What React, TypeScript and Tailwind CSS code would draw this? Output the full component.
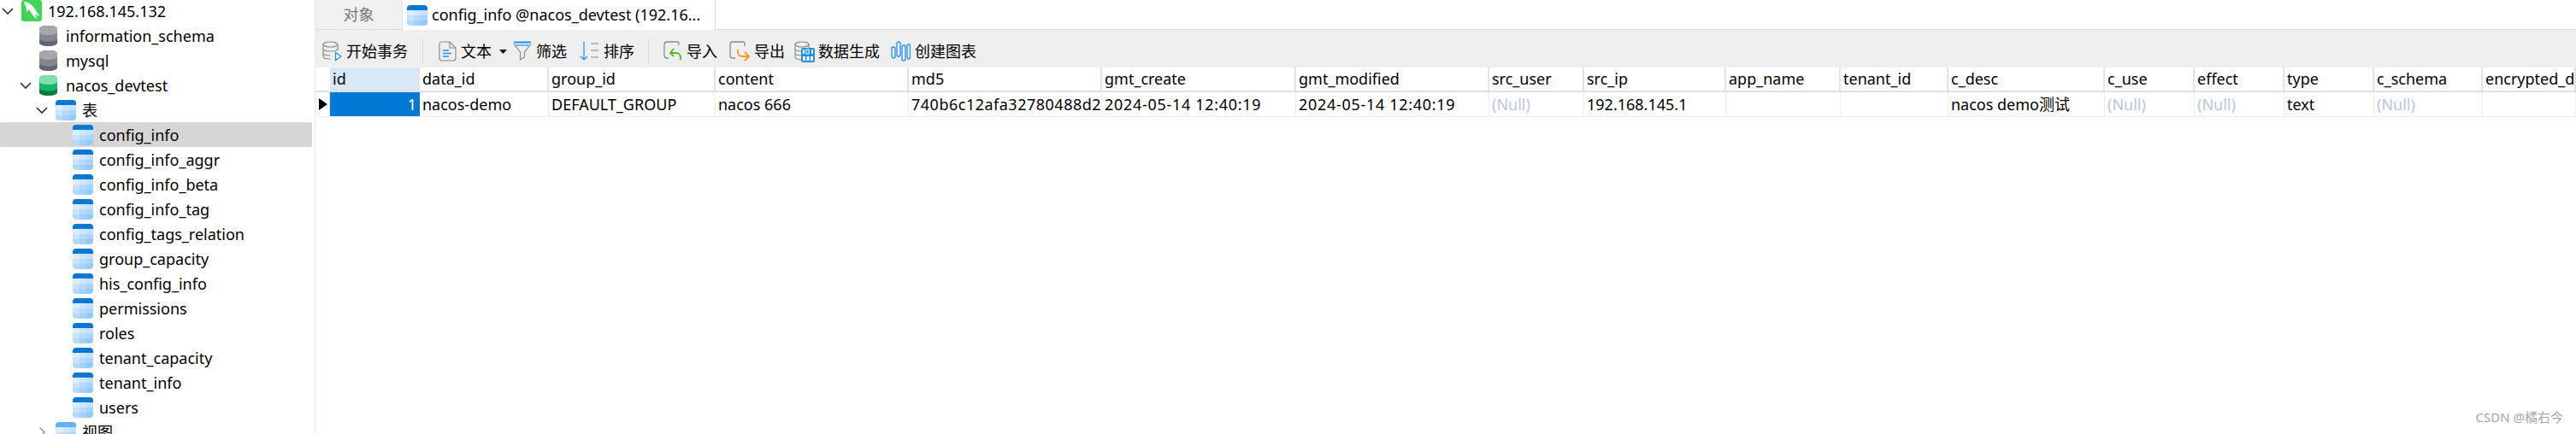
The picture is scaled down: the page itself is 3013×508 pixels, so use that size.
const tables = [
  "config_info",
  "config_info_aggr",
  "config_info_beta",
  "config_info_tag",
  "config_tags_relation",
  "group_capacity",
  "his_config_info",
  "permissions",
  "roles",
  "tenant_capacity",
  "tenant_info",
  "users",
];

const columns = [
  "id",
  "data_id",
  "group_id",
  "content",
  "md5",
  "gmt_create",
  "gmt_modified",
  "src_user",
  "src_ip",
  "app_name",
  "tenant_id",
  "c_desc",
  "c_use",
  "effect",
  "type",
  "c_schema",
  "encrypted_data_key",
];

const row = [
  "1",
  "nacos-demo",
  "DEFAULT_GROUP",
  "nacos 666",
  "740b6c12afa32780488d2",
  "2024-05-14 12:40:19",
  "2024-05-14 12:40:19",
  "(Null)",
  "192.168.145.1",
  "",
  "",
  "nacos demo测试",
  "(Null)",
  "(Null)",
  "text",
  "(Null)",
  "",
];

const gridCols =
  "grid grid-cols-[17px_105px_151px_195px_226px_226px_227px_226px_111px_166px_134px_126px_183px_105px_105px_105px_127px_109px]";

function Chevron({ open = true }: { open?: boolean }) {
  return (
    <svg width="14" height="14" viewBox="0 0 14 14" fill="none" stroke={open ? "#333" : "#999"} strokeWidth="1.600">
      {open ? <path d="M1 4l6 6 6-6" /> : <path d="M4.500 1.500 10 7l-5.500 5.500" />}
    </svg>
  );
}

function TableIcon({ faded = false }: { faded?: boolean }) {
  return (
    <svg width="24" height="24" viewBox="0 0 24 24" className="shrink-0">
      <defs>
        <clipPath id="tbl">
          <rect width="24" height="24" rx="4" />
        </clipPath>
      </defs>
      <g clipPath="url(#tbl)">
        <rect width="24" height="6" fill={faded ? "#62b2f2" : "#0a78d2"} />
        <rect y="6" width="8" height="6" fill="#dcedff" />
        <rect x="8" y="6" width="8" height="6" fill="#cfe6ff" />
        <rect x="16" y="6" width="8" height="6" fill="#c3e0ff" />
        <rect y="12" width="8" height="6" fill="#c9e3ff" />
        <rect x="8" y="12" width="8" height="6" fill="#b6daff" />
        <rect x="16" y="12" width="8" height="6" fill="#a9d4ff" />
        <rect y="18" width="8" height="6" fill="#b4d9ff" />
        <rect x="8" y="18" width="8" height="6" fill="#a2d0ff" />
        <rect x="16" y="18" width="8" height="6" fill="#92c9ff" />
      </g>
    </svg>
  );
}

function DbIcon({ top, mid, low }: { top: string; mid: string; low: string }) {
  return (
    <svg width="21" height="24" viewBox="0 0 21 24" className="mr-[3px] shrink-0">
      <path d="M0 4C0 1.500 4.500 0 10.500 0S21 1.500 21 4v16c0 2.500-4.500 4-10.500 4S0 22.500 0 20z" fill={low} />
      <path d="M0 4C0 1.500 4.500 0 10.500 0S21 1.500 21 4v11c0 2.500-4.500 3.500-10.500 3.500S0 17.500 0 15z" fill={mid} />
      <path d="M0 4C0 1.500 4.500 0 10.500 0S21 1.500 21 4v3c0 2.500-4.500 4-10.500 4S0 9.500 0 7z" fill={top} />
    </svg>
  );
}

function MysqlIcon() {
  return (
    <svg width="24" height="25" viewBox="0 0 24 25" className="shrink-0">
      <rect width="24" height="25" rx="3" fill="#3fd555" />
      <path
        d="M3 2c3 0 6 1.500 8.500 3.500 2.500 2 4 4 5.500 7 1 2 2.500 4 4.500 6.500-2.500-.5-4-1.500-5-2.500.5 2 1 3.500 2 5.500-3-1.500-5-3.500-6.500-6-1-2-2-3.500-3.500-4.500-.5 1-1 2-2.500 2.500.5-1.500.5-3-.5-5C5 6.500 3.500 4.500 3 2z"
        fill="#fff"
      />
    </svg>
  );
}

function TreeRow({
  indent,
  chevron,
  icon,
  label,
  selected,
}: {
  indent: string;
  chevron?: "open" | "closed";
  icon: React.ReactNode;
  label: string;
  selected?: boolean;
}) {
  return (
    <div className={`flex h-[29px] shrink-0 items-center rounded-[2px] ${indent} ${selected ? "bg-[#d6d6d6]" : ""}`}>
      {chevron ? (
        <div className="-ml-[3px] w-[23px] shrink-0">
          <Chevron open={chevron === "open"} />
        </div>
      ) : (
        <div className="w-[20px] shrink-0" />
      )}
      {icon}
      <span className="ml-[7px] whitespace-nowrap leading-none">{label}</span>
    </div>
  );
}

function ToolButton({ icon, label, className }: { icon: React.ReactNode; label: string; className?: string }) {
  return (
    <div className={`flex items-center gap-[5px] ${className ?? ""}`}>
      {icon}
      <span className="whitespace-nowrap">{label}</span>
    </div>
  );
}

function Separator({ className }: { className: string }) {
  return <div className={`h-[30px] w-px bg-[#d9d9d9] ${className}`} />;
}

export default function App() {
  return (
    <div className="relative flex h-[508px] w-[3013px] overflow-hidden bg-white font-['Noto_Sans','Noto_Sans_CJK_SC',sans-serif] text-[18px] text-black">
      <aside className="-mt-[2px] flex w-[369px] shrink-0 flex-col border-r border-[#e8e8e8] pr-[3px]">
        <TreeRow indent="pl-[5px]" chevron="open" icon={<MysqlIcon />} label="192.168.145.132" />
        <TreeRow indent="pl-[26px]" icon={<DbIcon top="#a4a8ad" mid="#83888e" low="#62676d" />} label="information_schema" />
        <TreeRow indent="pl-[26px]" icon={<DbIcon top="#a4a8ad" mid="#83888e" low="#62676d" />} label="mysql" />
        <TreeRow
          indent="pl-[26px]"
          chevron="open"
          icon={<DbIcon top="#7fe0ac" mid="#14b765" low="#087a42" />}
          label="nacos_devtest"
        />
        <TreeRow indent="pl-[45px]" chevron="open" icon={<TableIcon />} label="表" />
        {tables.map((name, i) => (
          <TreeRow key={name} indent="pl-[65px]" icon={<TableIcon />} label={name} selected={i === 0} />
        ))}
        <TreeRow indent="pl-[45px]" chevron="closed" icon={<TableIcon faded />} label="视图" />
      </aside>

      <main className="flex min-w-0 flex-1 flex-col">
        <div className="flex h-[35px] shrink-0 border-b border-[#dcdcdc]">
          <div className="flex w-[102px] items-center justify-center border-r border-[#e2e2e2] bg-[#f0f0f0] text-[#777]">
            对象
          </div>
          <div className="-mb-px flex w-[366px] items-center gap-[5px] border-r border-[#dcdcdc] bg-white pl-[5px]">
            <TableIcon />
            <span className="whitespace-nowrap">config_info @nacos_devtest (192.16...</span>
          </div>
        </div>

        <div className="flex h-[44px] shrink-0 items-center bg-[#efefef] pl-[8px] pt-[6px]">
          <ToolButton
            label="开始事务"
            icon={
              <svg width="23" height="24" viewBox="0 0 23 24" fill="none" stroke="#8a8a8a" strokeWidth="1.200">
                <ellipse cx="9.500" cy="4" rx="8.500" ry="3" />
                <path d="M1 4v14c0 2 4 3 8.500 3M18 4v7M1 9c0 2 4 3 8.500 3s8.500-1 8.500-3M1 14c0 2 4 3 8.500 3" />
                <path d="M15.500 13.500v9l6.500-4.500z" stroke="#1e90ee" fill="#fff" />
              </svg>
            }
          />
          <Separator className="ml-[17px]" />
          <ToolButton
            className="ml-[18px]"
            label="文本"
            icon={
              <svg width="21" height="24" viewBox="0 0 21 24" fill="none" strokeWidth="1.200">
                <path d="M4 1h9l7 7v12a3 3 0 0 1-3 3H4a3 3 0 0 1-3-3V4a3 3 0 0 1 3-3z" stroke="#8a8a8a" />
                <path d="M13 1v7h7" stroke="#8a8a8a" />
                <path d="M5 11h7M5 14.500h10M5 18h7" stroke="#1e90ee" strokeWidth="1.400" />
              </svg>
            }
          />
          <svg width="9" height="5" viewBox="0 0 9 5" className="ml-[9px]">
            <path d="M0 0h9L4.500 5z" fill="#111" />
          </svg>
          <ToolButton
            className="ml-[7px]"
            label="筛选"
            icon={
              <svg width="22" height="24" viewBox="0 0 22 24" fill="none" strokeWidth="1.200">
                <path d="M1 3.500 8.500 13v9l5-3v-6L21 3.500" stroke="#8a8a8a" />
                <path d="M1 1.500h20" stroke="#1e90ee" strokeWidth="2" />
                <path d="M3 5h16" stroke="#1e90ee" strokeWidth="1.200" />
              </svg>
            }
          />
          <ToolButton
            className="ml-[15px]"
            label="排序"
            icon={
              <svg width="23" height="24" viewBox="0 0 23 24" fill="none" strokeWidth="1.200">
                <path d="M5 1v21M1 18l4 4 4-4" stroke="#1e90ee" />
                <path d="M13 3h9M13 11h9M13 19h9" stroke="#8a8a8a" />
              </svg>
            }
          />
          <Separator className="ml-[16px]" />
          <ToolButton
            className="ml-[17px]"
            label="导入"
            icon={
              <svg width="22" height="24" viewBox="0 0 22 24" fill="none" strokeWidth="1.300">
                <path d="M16 1H4a3 3 0 0 0-3 3v13a3 3 0 0 0 3 3h2M16 1a2 2 0 0 1 2 2v2" stroke="#8a8a8a" />
                <path d="M12 9 8 14l4 4M8.500 14H15a5 5 0 0 1 5 5v3" stroke="#52b81c" strokeWidth="1.800" />
              </svg>
            }
          />
          <ToolButton
            className="ml-[14px]"
            label="导出"
            icon={
              <svg width="24" height="24" viewBox="0 0 24 24" fill="none" strokeWidth="1.300">
                <path d="M16 1H4a3 3 0 0 0-3 3v13a3 3 0 0 0 3 3h3M16 1a2 2 0 0 1 2 2v3" stroke="#8a8a8a" />
                <path d="M10 10v3a5 5 0 0 0 5 5h7M18 13l5 5-5 5" stroke="#f59a12" strokeWidth="1.800" />
              </svg>
            }
          />
          <ToolButton
            className="ml-[11px]"
            label="数据生成"
            icon={
              <svg width="24" height="25" viewBox="0 0 24 25" fill="none" className="-mr-[1px]">
                <ellipse cx="9" cy="4" rx="8" ry="3" stroke="#8a8a8a" strokeWidth="1.100" />
                <path d="M1 4v15c0 2 4 3 8 3M17 4v4M1 9c0 2 4 3 8 3M1 14c0 2 4 3 8 3" stroke="#8a8a8a" strokeWidth="1.100" />
                <rect x="8" y="8" width="16" height="17" rx="2" fill="#1e90ee" />
                <rect x="10" y="10" width="2" height="5" fill="#fff" />
                <rect x="14" y="10" width="3" height="5" fill="none" stroke="#fff" strokeWidth="1" />
                <rect x="20" y="10" width="2" height="5" fill="#fff" />
                <rect x="10" y="18" width="3" height="5" fill="#fff" />
                <rect x="14.500" y="18" width="3" height="5" fill="#fff" />
                <rect x="19" y="18" width="3" height="5" fill="#fff" />
              </svg>
            }
          />
          <ToolButton
            className="ml-[13px]"
            label="创建图表"
            icon={
              <svg width="23" height="24" viewBox="0 0 23 24" fill="none" stroke="#1e90ee" strokeWidth="1.300">
                <rect x="1" y="7" width="4" height="13" rx="2" />
                <rect x="7" y="1" width="4" height="17" rx="2" />
                <rect x="13" y="5" width="4" height="18" rx="2" />
                <rect x="19" y="4" width="3.500" height="17" rx="1.750" />
              </svg>
            }
          />
        </div>

        <div className={`${gridCols} h-[29px] shrink-0 border-b-2 border-[#dfdfdf]`}>
          <div />
          {columns.map((col, i) => (
            <div
              key={col}
              className={`flex items-center overflow-hidden whitespace-nowrap border-r-2 border-[#e4e4e4] pl-[3px] ${
                i === 0 ? "bg-[#d8e8f6]" : ""
              }`}
            >
              {col}
            </div>
          ))}
        </div>
        <div className={`${gridCols} h-[29px] shrink-0 border-b border-[#eeeeee]`}>
          <div className="flex items-center justify-end border-r border-[#d8e8f6] pr-[2px]">
            <svg width="10" height="14" viewBox="0 0 10 14">
              <path d="M0 0l10 7-10 7z" fill="#000" />
            </svg>
          </div>
          {row.map((value, i) => (
            <div
              key={i}
              className={`flex items-center overflow-hidden whitespace-nowrap ${
                i === 0
                  ? "justify-end bg-[#0078d4] pr-[4px] text-white"
                  : "border-r border-[#eeeeee] pl-[3px]"
              } ${i === 4 ? "tracking-[0.5px]" : ""} ${i === 5 || i === 6 ? "tracking-[0.7px]" : ""} ${
                value === "(Null)" ? "text-[#b9c5dc]" : ""
              }`}
            >
              {value}
            </div>
          ))}
        </div>
      </main>

      <span className="absolute bottom-[11px] right-[15px] text-[15px] leading-[18px] text-[#a5a5a5]">CSDN @橘右今</span>
    </div>
  );
}
